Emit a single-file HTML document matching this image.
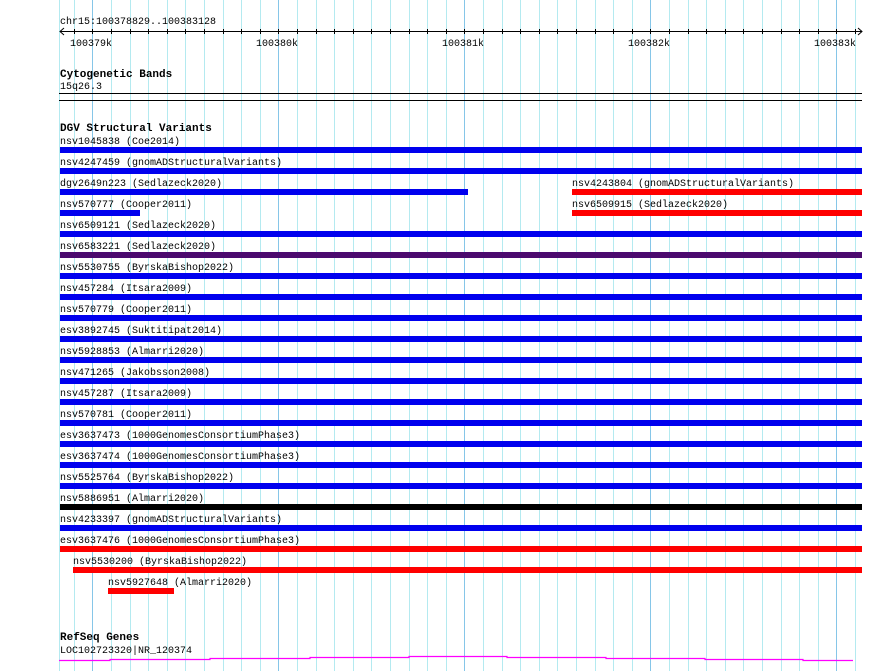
<!DOCTYPE html>
<html><head><meta charset="utf-8"><style>
body{margin:0;width:890px;height:671px;background:#fff;position:relative;overflow:hidden;font-family:"Liberation Mono",monospace;font-size:10px;color:#000}
.t{position:absolute;white-space:pre;line-height:11px;margin-top:2px}
.b{position:absolute;height:6px}
.h{position:absolute;font-weight:bold;font-size:11px;line-height:12px;white-space:pre;margin-top:1px}
</style></head><body>
<svg width="890" height="671" style="position:absolute;left:0;top:0">
<g stroke="#b4eaf0" stroke-width="1">
<line x1="59.5" y1="0" x2="59.5" y2="671"/>
<line x1="74.5" y1="0" x2="74.5" y2="671"/>
<line x1="111.5" y1="0" x2="111.5" y2="671"/><line x1="130.5" y1="0" x2="130.5" y2="671"/><line x1="148.5" y1="0" x2="148.5" y2="671"/><line x1="167.5" y1="0" x2="167.5" y2="671"/><line x1="185.5" y1="0" x2="185.5" y2="671"/><line x1="204.5" y1="0" x2="204.5" y2="671"/><line x1="223.5" y1="0" x2="223.5" y2="671"/><line x1="241.5" y1="0" x2="241.5" y2="671"/><line x1="260.5" y1="0" x2="260.5" y2="671"/>
<line x1="297.5" y1="0" x2="297.5" y2="671"/><line x1="316.5" y1="0" x2="316.5" y2="671"/><line x1="334.5" y1="0" x2="334.5" y2="671"/><line x1="353.5" y1="0" x2="353.5" y2="671"/><line x1="371.5" y1="0" x2="371.5" y2="671"/><line x1="390.5" y1="0" x2="390.5" y2="671"/><line x1="409.5" y1="0" x2="409.5" y2="671"/><line x1="427.5" y1="0" x2="427.5" y2="671"/><line x1="446.5" y1="0" x2="446.5" y2="671"/>
<line x1="483.5" y1="0" x2="483.5" y2="671"/><line x1="502.5" y1="0" x2="502.5" y2="671"/><line x1="520.5" y1="0" x2="520.5" y2="671"/><line x1="539.5" y1="0" x2="539.5" y2="671"/><line x1="557.5" y1="0" x2="557.5" y2="671"/><line x1="576.5" y1="0" x2="576.5" y2="671"/><line x1="595.5" y1="0" x2="595.5" y2="671"/><line x1="613.5" y1="0" x2="613.5" y2="671"/><line x1="632.5" y1="0" x2="632.5" y2="671"/>
<line x1="669.5" y1="0" x2="669.5" y2="671"/><line x1="688.5" y1="0" x2="688.5" y2="671"/><line x1="706.5" y1="0" x2="706.5" y2="671"/><line x1="725.5" y1="0" x2="725.5" y2="671"/><line x1="743.5" y1="0" x2="743.5" y2="671"/><line x1="762.5" y1="0" x2="762.5" y2="671"/><line x1="781.5" y1="0" x2="781.5" y2="671"/><line x1="799.5" y1="0" x2="799.5" y2="671"/><line x1="818.5" y1="0" x2="818.5" y2="671"/>
<line x1="855.5" y1="0" x2="855.5" y2="671"/>
</g>
<g stroke="#86c6e8" stroke-width="1">
<line x1="92.5" y1="0" x2="92.5" y2="671"/><line x1="278.5" y1="0" x2="278.5" y2="671"/><line x1="464.5" y1="0" x2="464.5" y2="671"/><line x1="650.5" y1="0" x2="650.5" y2="671"/><line x1="836.5" y1="0" x2="836.5" y2="671"/>
</g>
<g stroke="#000" stroke-width="1" fill="none">
<line x1="60" y1="31.5" x2="862" y2="31.5"/>
<polyline points="64,28 60,31.5 64,35"/>
<polyline points="858,28 862,31.5 858,35"/>
<line x1="59" y1="93.5" x2="862" y2="93.5"/>
<line x1="59" y1="100.5" x2="862" y2="100.5"/>
</g>
<g stroke="#000" stroke-width="1">
<line x1="74.5" y1="29" x2="74.5" y2="34"/><line x1="92.5" y1="29" x2="92.5" y2="34"/><line x1="111.5" y1="29" x2="111.5" y2="34"/><line x1="130.5" y1="29" x2="130.5" y2="34"/><line x1="148.5" y1="29" x2="148.5" y2="34"/><line x1="167.5" y1="29" x2="167.5" y2="34"/><line x1="185.5" y1="29" x2="185.5" y2="34"/><line x1="204.5" y1="29" x2="204.5" y2="34"/><line x1="223.5" y1="29" x2="223.5" y2="34"/><line x1="241.5" y1="29" x2="241.5" y2="34"/><line x1="260.5" y1="29" x2="260.5" y2="34"/><line x1="278.5" y1="29" x2="278.5" y2="34"/><line x1="297.5" y1="29" x2="297.5" y2="34"/><line x1="316.5" y1="29" x2="316.5" y2="34"/><line x1="334.5" y1="29" x2="334.5" y2="34"/><line x1="353.5" y1="29" x2="353.5" y2="34"/><line x1="371.5" y1="29" x2="371.5" y2="34"/><line x1="390.5" y1="29" x2="390.5" y2="34"/><line x1="409.5" y1="29" x2="409.5" y2="34"/><line x1="427.5" y1="29" x2="427.5" y2="34"/><line x1="446.5" y1="29" x2="446.5" y2="34"/><line x1="464.5" y1="29" x2="464.5" y2="34"/><line x1="483.5" y1="29" x2="483.5" y2="34"/><line x1="502.5" y1="29" x2="502.5" y2="34"/><line x1="520.5" y1="29" x2="520.5" y2="34"/><line x1="539.5" y1="29" x2="539.5" y2="34"/><line x1="557.5" y1="29" x2="557.5" y2="34"/><line x1="576.5" y1="29" x2="576.5" y2="34"/><line x1="595.5" y1="29" x2="595.5" y2="34"/><line x1="613.5" y1="29" x2="613.5" y2="34"/><line x1="632.5" y1="29" x2="632.5" y2="34"/><line x1="650.5" y1="29" x2="650.5" y2="34"/><line x1="669.5" y1="29" x2="669.5" y2="34"/><line x1="688.5" y1="29" x2="688.5" y2="34"/><line x1="706.5" y1="29" x2="706.5" y2="34"/><line x1="725.5" y1="29" x2="725.5" y2="34"/><line x1="743.5" y1="29" x2="743.5" y2="34"/><line x1="762.5" y1="29" x2="762.5" y2="34"/><line x1="781.5" y1="29" x2="781.5" y2="34"/><line x1="799.5" y1="29" x2="799.5" y2="34"/><line x1="818.5" y1="29" x2="818.5" y2="34"/><line x1="836.5" y1="29" x2="836.5" y2="34"/><line x1="855.5" y1="29" x2="855.5" y2="34"/>
</g>
<polyline fill="none" stroke="#ff00ff" stroke-width="1.2" points="59,660.5 110,660.5 110,659.5 210,659.5 210,658.5 310,658.5 310,657.5 409,657.5 409,656.5 507,656.5 507,657.5 606,657.5 606,658.5 705,658.5 705,659.5 803,659.5 803,660.5 853,660.5"/>
</svg>

<div class="t" style="left:60px;top:15px">chr15:100378829..100383128</div>
<div class="t" style="left:70px;top:37px">100379k</div>
<div class="t" style="left:256px;top:37px">100380k</div>
<div class="t" style="left:442px;top:37px">100381k</div>
<div class="t" style="left:628px;top:37px">100382k</div>
<div class="t" style="left:814px;top:37px">100383k</div>

<div class="h" style="left:60px;top:68px">Cytogenetic Bands</div>
<div class="t" style="left:60px;top:80px">15q26.3</div>

<div class="h" style="left:60px;top:122px">DGV Structural Variants</div>

<div class="t" style="left:60px;top:135px">nsv1045838 (Coe2014)</div><div class="b" style="left:60px;width:802px;top:147px;background:#0000ee"></div>
<div class="t" style="left:60px;top:156px">nsv4247459 (gnomADStructuralVariants)</div><div class="b" style="left:60px;width:802px;top:168px;background:#0000ee"></div>
<div class="t" style="left:60px;top:177px">dgv2649n223 (Sedlazeck2020)</div><div class="b" style="left:60px;width:408px;top:189px;background:#0000ee"></div>
<div class="t" style="left:572px;top:177px">nsv4243804 (gnomADStructuralVariants)</div><div class="b" style="left:572px;width:290px;top:189px;background:#ff0000"></div>
<div class="t" style="left:60px;top:198px">nsv570777 (Cooper2011)</div><div class="b" style="left:60px;width:80px;top:210px;background:#0000ee"></div>
<div class="t" style="left:572px;top:198px">nsv6509915 (Sedlazeck2020)</div><div class="b" style="left:572px;width:290px;top:210px;background:#ff0000"></div>
<div class="t" style="left:60px;top:219px">nsv6509121 (Sedlazeck2020)</div><div class="b" style="left:60px;width:802px;top:231px;background:#0000ee"></div>
<div class="t" style="left:60px;top:240px">nsv6583221 (Sedlazeck2020)</div><div class="b" style="left:60px;width:802px;top:252px;background:#4b0a6e"></div>
<div class="t" style="left:60px;top:261px">nsv5530755 (ByrskaBishop2022)</div><div class="b" style="left:60px;width:802px;top:273px;background:#0000ee"></div>
<div class="t" style="left:60px;top:282px">nsv457284 (Itsara2009)</div><div class="b" style="left:60px;width:802px;top:294px;background:#0000ee"></div>
<div class="t" style="left:60px;top:303px">nsv570779 (Cooper2011)</div><div class="b" style="left:60px;width:802px;top:315px;background:#0000ee"></div>
<div class="t" style="left:60px;top:324px">esv3892745 (Suktitipat2014)</div><div class="b" style="left:60px;width:802px;top:336px;background:#0000ee"></div>
<div class="t" style="left:60px;top:345px">nsv5928853 (Almarri2020)</div><div class="b" style="left:60px;width:802px;top:357px;background:#0000ee"></div>
<div class="t" style="left:60px;top:366px">nsv471265 (Jakobsson2008)</div><div class="b" style="left:60px;width:802px;top:378px;background:#0000ee"></div>
<div class="t" style="left:60px;top:387px">nsv457287 (Itsara2009)</div><div class="b" style="left:60px;width:802px;top:399px;background:#0000ee"></div>
<div class="t" style="left:60px;top:408px">nsv570781 (Cooper2011)</div><div class="b" style="left:60px;width:802px;top:420px;background:#0000ee"></div>
<div class="t" style="left:60px;top:429px">esv3637473 (1000GenomesConsortiumPhase3)</div><div class="b" style="left:60px;width:802px;top:441px;background:#0000ee"></div>
<div class="t" style="left:60px;top:450px">esv3637474 (1000GenomesConsortiumPhase3)</div><div class="b" style="left:60px;width:802px;top:462px;background:#0000ee"></div>
<div class="t" style="left:60px;top:471px">nsv5525764 (ByrskaBishop2022)</div><div class="b" style="left:60px;width:802px;top:483px;background:#0000ee"></div>
<div class="t" style="left:60px;top:492px">nsv5886951 (Almarri2020)</div><div class="b" style="left:60px;width:802px;top:504px;background:#000"></div>
<div class="t" style="left:60px;top:513px">nsv4233397 (gnomADStructuralVariants)</div><div class="b" style="left:60px;width:802px;top:525px;background:#0000ee"></div>
<div class="t" style="left:60px;top:534px">esv3637476 (1000GenomesConsortiumPhase3)</div><div class="b" style="left:60px;width:802px;top:546px;background:#ff0000"></div>
<div class="t" style="left:73px;top:555px">nsv5530200 (ByrskaBishop2022)</div><div class="b" style="left:73px;width:789px;top:567px;background:#ff0000"></div>
<div class="t" style="left:108px;top:576px">nsv5927648 (Almarri2020)</div><div class="b" style="left:108px;width:66px;top:588px;background:#ff0000"></div>

<div class="h" style="left:60px;top:631px">RefSeq Genes</div>
<div class="t" style="left:60px;top:644px">LOC102723320|NR_120374</div>
</body></html>
